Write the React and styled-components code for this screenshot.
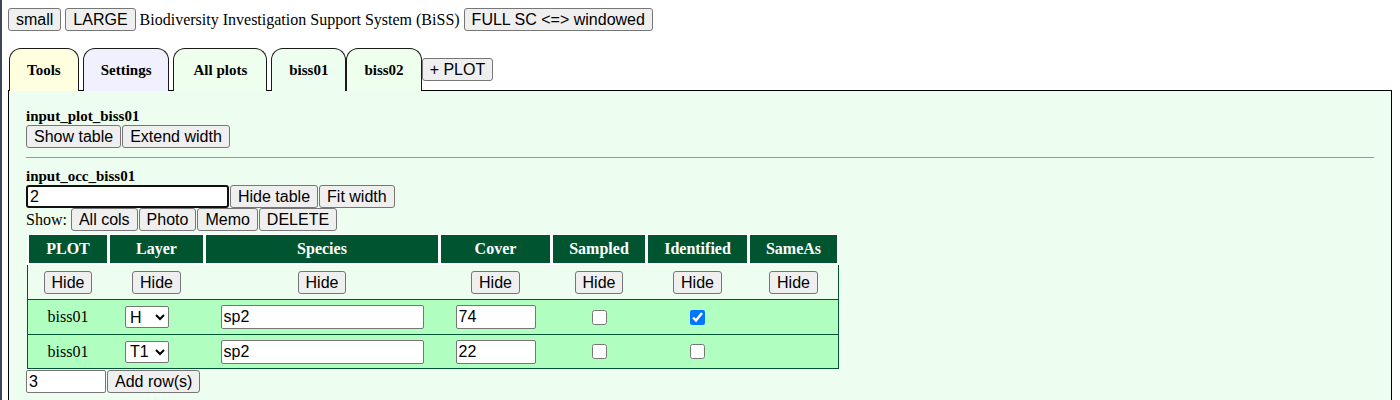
import React from "react";
import styled, { createGlobalStyle } from "styled-components";

const GlobalStyle = createGlobalStyle`
  body {
    margin: 8px;
    font-family: "Liberation Serif", "Times New Roman", serif;
    font-size: 16px;
    color: #000;
    background: #fff;
  }
  body::before {
    content: "";
    position: fixed;
    left: 0;
    top: 0;
    bottom: 0;
    width: 2px;
    background: #3b4757;
  }
`;

const PANEL_BG = "#edfdef";
const DARK_GREEN = "#005530";

const Button = styled.button`
  font: 16px "Liberation Sans", Arial, sans-serif;
  line-height: 19px;
  padding: 1px 7px;
  margin: 0;
  border: 1px solid #767676;
  border-radius: 3px;
  background: #efefef;
  color: #000;
  white-space: nowrap;
`;

const TopBar = styled.div`
  display: flex;
  align-items: center;
  gap: 4px;
  height: 23px;
`;

const TabBar = styled.div`
  display: flex;
  align-items: flex-end;
  margin-top: 17px;
  margin-bottom: -1px;
  padding-left: 1px;
  height: 43px;
`;

const Tab = styled.div`
  box-sizing: border-box;
  height: 43px;
  display: flex;
  align-items: center;
  justify-content: center;
  padding: 0 ${(p) => p.$pad || 17}px;
  margin-right: ${(p) => (p.$tight ? 0 : 4)}px;
  border: 1px solid #1a1a1a;
  border-bottom: none;
  border-radius: 12px 12px 0 0;
  background: ${(p) => p.$bg};
  font-weight: bold;
  font-size: 15px;
  position: ${(p) => (p.$active ? "relative" : "static")};
  z-index: ${(p) => (p.$active ? 1 : "auto")};
`;

const AddPlot = styled(Button)`
  align-self: center;
`;

const Panel = styled.div`
  border: 1px solid #000;
  background: ${PANEL_BG};
  padding: 16px 17px 20px;
  min-height: 300px;
`;

const SectionTitle = styled.div`
  font-weight: bold;
  font-size: 15px;
  line-height: 18px;
  height: 18px;
`;

const ButtonRow = styled.div`
  display: flex;
  align-items: center;
  gap: 1px;
  height: 23px;
`;

const Divider = styled.hr`
  border: 0;
  border-top: 1px solid #9a9a9a;
  margin: 9px 0 9px;
  height: 0;
`;

const TextInput = styled.input`
  box-sizing: border-box;
  width: ${(p) => p.$w}px;
  height: ${(p) => p.$h || 24}px;
  margin: 0;
  padding: 1px 2px;
  font: 16px "Liberation Sans", Arial, sans-serif;
  color: #000;
  background: #fff;
  border: ${(p) => (p.$focused ? "2px solid #101010" : "1px solid #767676")};
  border-radius: ${(p) => (p.$focused ? 3 : 2)}px;
  outline: none;
`;

const ShowLabel = styled.span`
  font-size: 16px;
  margin-right: 3px;
`;

const Table = styled.div`
  margin: 3px 0 0 1px;
  width: fit-content;
`;

const COLS = "78px 93px 232px 109px 92px 99px 87px";

const HeaderRow = styled.div`
  display: grid;
  grid-template-columns: ${COLS};
  column-gap: 3px;
  padding: 1px 2px 2px;
  background: #fff;
`;

const HeaderCell = styled.div`
  height: 28px;
  display: flex;
  align-items: center;
  justify-content: center;
  background: ${DARK_GREEN};
  color: #fff;
  font-weight: bold;
  font-size: 16px;
`;

const BodyRow = styled.div`
  box-sizing: border-box;
  display: grid;
  grid-template-columns: ${COLS};
  column-gap: 3px;
  align-items: center;
  justify-items: center;
  height: 35px;
  padding: 0 1px;
  border: 1px solid ${DARK_GREEN};
  border-top: none;
  background: ${(p) => p.$bg};
  &:last-child {
    height: 34px;
  }
`;

const LayerSelect = styled.select`
  box-sizing: border-box;
  width: 44px;
  height: 22px;
  margin: 0 19px 0 0;
  font: 16px "Liberation Sans", Arial, sans-serif;
  color: #000;
  background: #fff;
  border: 1px solid #767676;
  border-radius: 2px;
`;

const Check = styled.input`
  margin: 0;
  width: 15px;
  height: 15px;
`;

const AddRow = styled.div`
  display: flex;
  align-items: center;
  gap: 1px;
  margin-top: 1px;
`;

const columns = ["PLOT", "Layer", "Species", "Cover", "Sampled", "Identified", "SameAs"];

const rows = [
  { plot: "biss01", layer: "H", species: "sp2", cover: "74", sampled: false, identified: true },
  { plot: "biss01", layer: "T1", species: "sp2", cover: "22", sampled: false, identified: false },
];

const tabs = [
  { label: "Tools", bg: "#ffffe0" },
  { label: "Settings", bg: "#f0f0ff" },
  { label: "All plots", bg: "#eeffee", pad: 19 },
  { label: "biss01", bg: PANEL_BG, active: true, tight: true },
  { label: "biss02", bg: "#eeffee", tight: true },
];

export default function App() {
  return (
    <>
      <GlobalStyle />
      <TopBar>
        <Button>small</Button>
        <Button>LARGE</Button>
        <span>Biodiversity Investigation Support System (BiSS)</span>
        <Button>FULL SC &lt;=&gt; windowed</Button>
      </TopBar>
      <TabBar>
        {tabs.map((t) => (
          <Tab key={t.label} $bg={t.bg} $active={t.active} $tight={t.tight} $pad={t.pad}>
            {t.label}
          </Tab>
        ))}
        <AddPlot>+ PLOT</AddPlot>
      </TabBar>
      <Panel>
        <SectionTitle>input_plot_biss01</SectionTitle>
        <ButtonRow>
          <Button>Show table</Button>
          <Button>Extend width</Button>
        </ButtonRow>
        <Divider />
        <SectionTitle>input_occ_biss01</SectionTitle>
        <ButtonRow>
          <TextInput $w={203} $h={23} $focused defaultValue="2" />
          <Button>Hide table</Button>
          <Button>Fit width</Button>
        </ButtonRow>
        <ButtonRow>
          <ShowLabel>Show:</ShowLabel>
          <Button>All cols</Button>
          <Button>Photo</Button>
          <Button>Memo</Button>
          <Button>DELETE</Button>
        </ButtonRow>
        <Table>
          <HeaderRow>
            {columns.map((c) => (
              <HeaderCell key={c}>{c}</HeaderCell>
            ))}
          </HeaderRow>
          <BodyRow $bg={PANEL_BG}>
            {columns.map((c) => (
              <Button key={c}>Hide</Button>
            ))}
          </BodyRow>
          {rows.map((r, i) => (
            <BodyRow key={i} $bg="#b0ffc0">
              <span>{r.plot}</span>
              <LayerSelect defaultValue={r.layer}>
                <option>H</option>
                <option>S</option>
                <option>T1</option>
                <option>T2</option>
              </LayerSelect>
              <TextInput $w={203} defaultValue={r.species} />
              <TextInput $w={80} defaultValue={r.cover} />
              <Check type="checkbox" defaultChecked={r.sampled} />
              <Check type="checkbox" defaultChecked={r.identified} />
              <span />
            </BodyRow>
          ))}
        </Table>
        <AddRow>
          <TextInput $w={80} $h={23} defaultValue="3" />
          <Button>Add row(s)</Button>
        </AddRow>
      </Panel>
    </>
  );
}
